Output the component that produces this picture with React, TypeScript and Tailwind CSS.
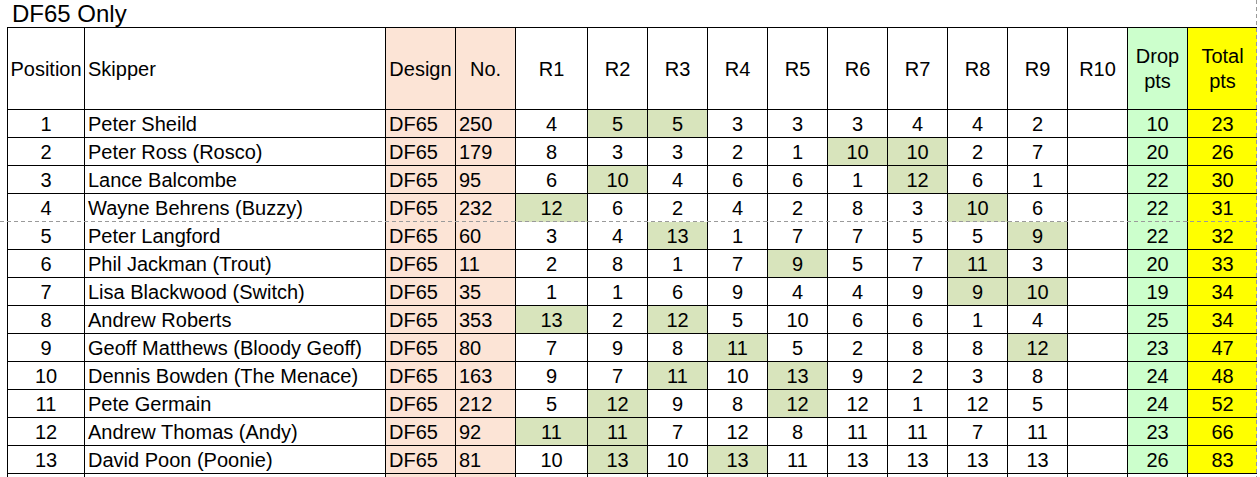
import React from 'react';

interface Entry {
  pos: number;
  skipper: string;
  no: number;
  races: number[];
  drops: number[]; // indexes of the discarded races
  drop: number;
  total: number;
}

const entries: Entry[] = [
  { pos: 1, skipper: 'Peter Sheild', no: 250, races: [4, 5, 5, 3, 3, 3, 4, 4, 2], drops: [1, 2], drop: 10, total: 23 },
  { pos: 2, skipper: 'Peter Ross (Rosco)', no: 179, races: [8, 3, 3, 2, 1, 10, 10, 2, 7], drops: [5, 6], drop: 20, total: 26 },
  { pos: 3, skipper: 'Lance Balcombe', no: 95, races: [6, 10, 4, 6, 6, 1, 12, 6, 1], drops: [1, 6], drop: 22, total: 30 },
  { pos: 4, skipper: 'Wayne Behrens (Buzzy)', no: 232, races: [12, 6, 2, 4, 2, 8, 3, 10, 6], drops: [0, 7], drop: 22, total: 31 },
  { pos: 5, skipper: 'Peter Langford', no: 60, races: [3, 4, 13, 1, 7, 7, 5, 5, 9], drops: [2, 8], drop: 22, total: 32 },
  { pos: 6, skipper: 'Phil Jackman (Trout)', no: 11, races: [2, 8, 1, 7, 9, 5, 7, 11, 3], drops: [4, 7], drop: 20, total: 33 },
  { pos: 7, skipper: 'Lisa Blackwood (Switch)', no: 35, races: [1, 1, 6, 9, 4, 4, 9, 9, 10], drops: [7, 8], drop: 19, total: 34 },
  { pos: 8, skipper: 'Andrew Roberts', no: 353, races: [13, 2, 12, 5, 10, 6, 6, 1, 4], drops: [0, 2], drop: 25, total: 34 },
  { pos: 9, skipper: 'Geoff Matthews (Bloody Geoff)', no: 80, races: [7, 9, 8, 11, 5, 2, 8, 8, 12], drops: [3, 8], drop: 23, total: 47 },
  { pos: 10, skipper: 'Dennis Bowden (The Menace)', no: 163, races: [9, 7, 11, 10, 13, 9, 2, 3, 8], drops: [2, 4], drop: 24, total: 48 },
  { pos: 11, skipper: 'Pete Germain', no: 212, races: [5, 12, 9, 8, 12, 12, 1, 12, 5], drops: [1, 4], drop: 24, total: 52 },
  { pos: 12, skipper: 'Andrew Thomas (Andy)', no: 92, races: [11, 11, 7, 12, 8, 11, 11, 7, 11], drops: [0, 1], drop: 23, total: 66 },
  { pos: 13, skipper: 'David Poon (Poonie)', no: 81, races: [10, 13, 10, 13, 11, 13, 13, 13, 13], drops: [1, 3], drop: 26, total: 83 },
];

const raceHeaders = ['R1', 'R2', 'R3', 'R4', 'R5', 'R6', 'R7', 'R8', 'R9', 'R10'];

// row 4 sits on the page break, so its bottom line is the dashed one drawn over it
const cellBase = 'h-[28px] flex items-center border-b border-r border-black';

export default function App() {
  return (
    <div className="relative w-[1260px] h-[477px] overflow-hidden bg-white text-black font-['Liberation_Sans',Arial,sans-serif]">
      <div className="h-[27px] pl-[12px] text-[24px] leading-[27px]">DF65 Only</div>

      <div className="ml-[7px] w-[1250px] grid grid-cols-[77px_301px_70px_60px_72px_repeat(10,60px)_69px] border-l border-t border-black text-[20px]">
        {/* header */}
        <div className="h-[82px] flex items-center justify-center border-b border-r border-black">Position</div>
        <div className="h-[82px] flex items-center pl-[3px] border-b border-r border-black">Skipper</div>
        <div className="h-[82px] flex items-center justify-center border-b border-r border-black bg-[#fce4d6]">Design</div>
        <div className="h-[82px] flex items-center justify-center border-b border-r border-black bg-[#fce4d6]">No.</div>
        {raceHeaders.map((r) => (
          <div key={r} className="h-[82px] flex items-center justify-center border-b border-r border-black">
            {r}
          </div>
        ))}
        <div className="h-[82px] flex items-center justify-center text-center leading-[25px] border-b border-r border-black bg-[#ccffcc]">
          Drop<br />pts
        </div>
        <div className="h-[82px] flex items-center justify-center text-center leading-[25px] border-b border-black bg-[#ffff00]">
          Total<br />pts
        </div>

        {entries.map((e) => {
          const edge = e.pos === 4 ? 'border-b-transparent' : '';
          return (
            <React.Fragment key={e.pos}>
              <div className={`${cellBase} ${edge} justify-center`}>{e.pos}</div>
              <div className={`${cellBase} ${edge} pl-[3px] whitespace-nowrap`}>{e.skipper}</div>
              <div className={`${cellBase} ${edge} pl-[3px] bg-[#fce4d6]`}>DF65</div>
              <div className={`${cellBase} ${edge} pl-[3px] bg-[#fce4d6]`}>{e.no}</div>
              {e.races.map((r, i) => (
                <div
                  key={i}
                  className={`${cellBase} ${edge} justify-center ${e.drops.includes(i) ? 'bg-[#d8e4bc]' : ''}`}
                >
                  {r}
                </div>
              ))}
              <div className={`${cellBase} ${edge}`}></div>
              <div className={`${cellBase} ${edge} justify-center bg-[#ccffcc]`}>{e.drop}</div>
              <div className={`h-[28px] flex items-center justify-center border-b border-black bg-[#ffff00] ${edge}`}>
                {e.total}
              </div>
            </React.Fragment>
          );
        })}

        {/* next (empty) row, cut off by the window */}
        <div className="h-[28px] border-r border-black"></div>
        <div className="h-[28px] border-r border-black"></div>
        <div className="h-[28px] border-r border-black bg-[#fce4d6]"></div>
        <div className="h-[28px] border-r border-black bg-[#fce4d6]"></div>
        {raceHeaders.map((r) => (
          <div key={r} className="h-[28px] border-r border-black"></div>
        ))}
        <div className="h-[28px] border-r border-black"></div>
        <div className="h-[28px]"></div>
      </div>

      {/* page-break guides */}
      <div className="absolute left-0 top-[221px] w-[1257px] h-px bg-[repeating-linear-gradient(to_right,#9a9a9a_0_4px,transparent_4px_7px)]"></div>
      <div className="absolute left-[1256px] top-0 w-px h-full bg-[repeating-linear-gradient(to_bottom,#9a9a9a_0_4px,transparent_4px_7px)]"></div>
      <div className="absolute left-[1257px] top-0 w-[3px] h-full bg-white"></div>
    </div>
  );
}
